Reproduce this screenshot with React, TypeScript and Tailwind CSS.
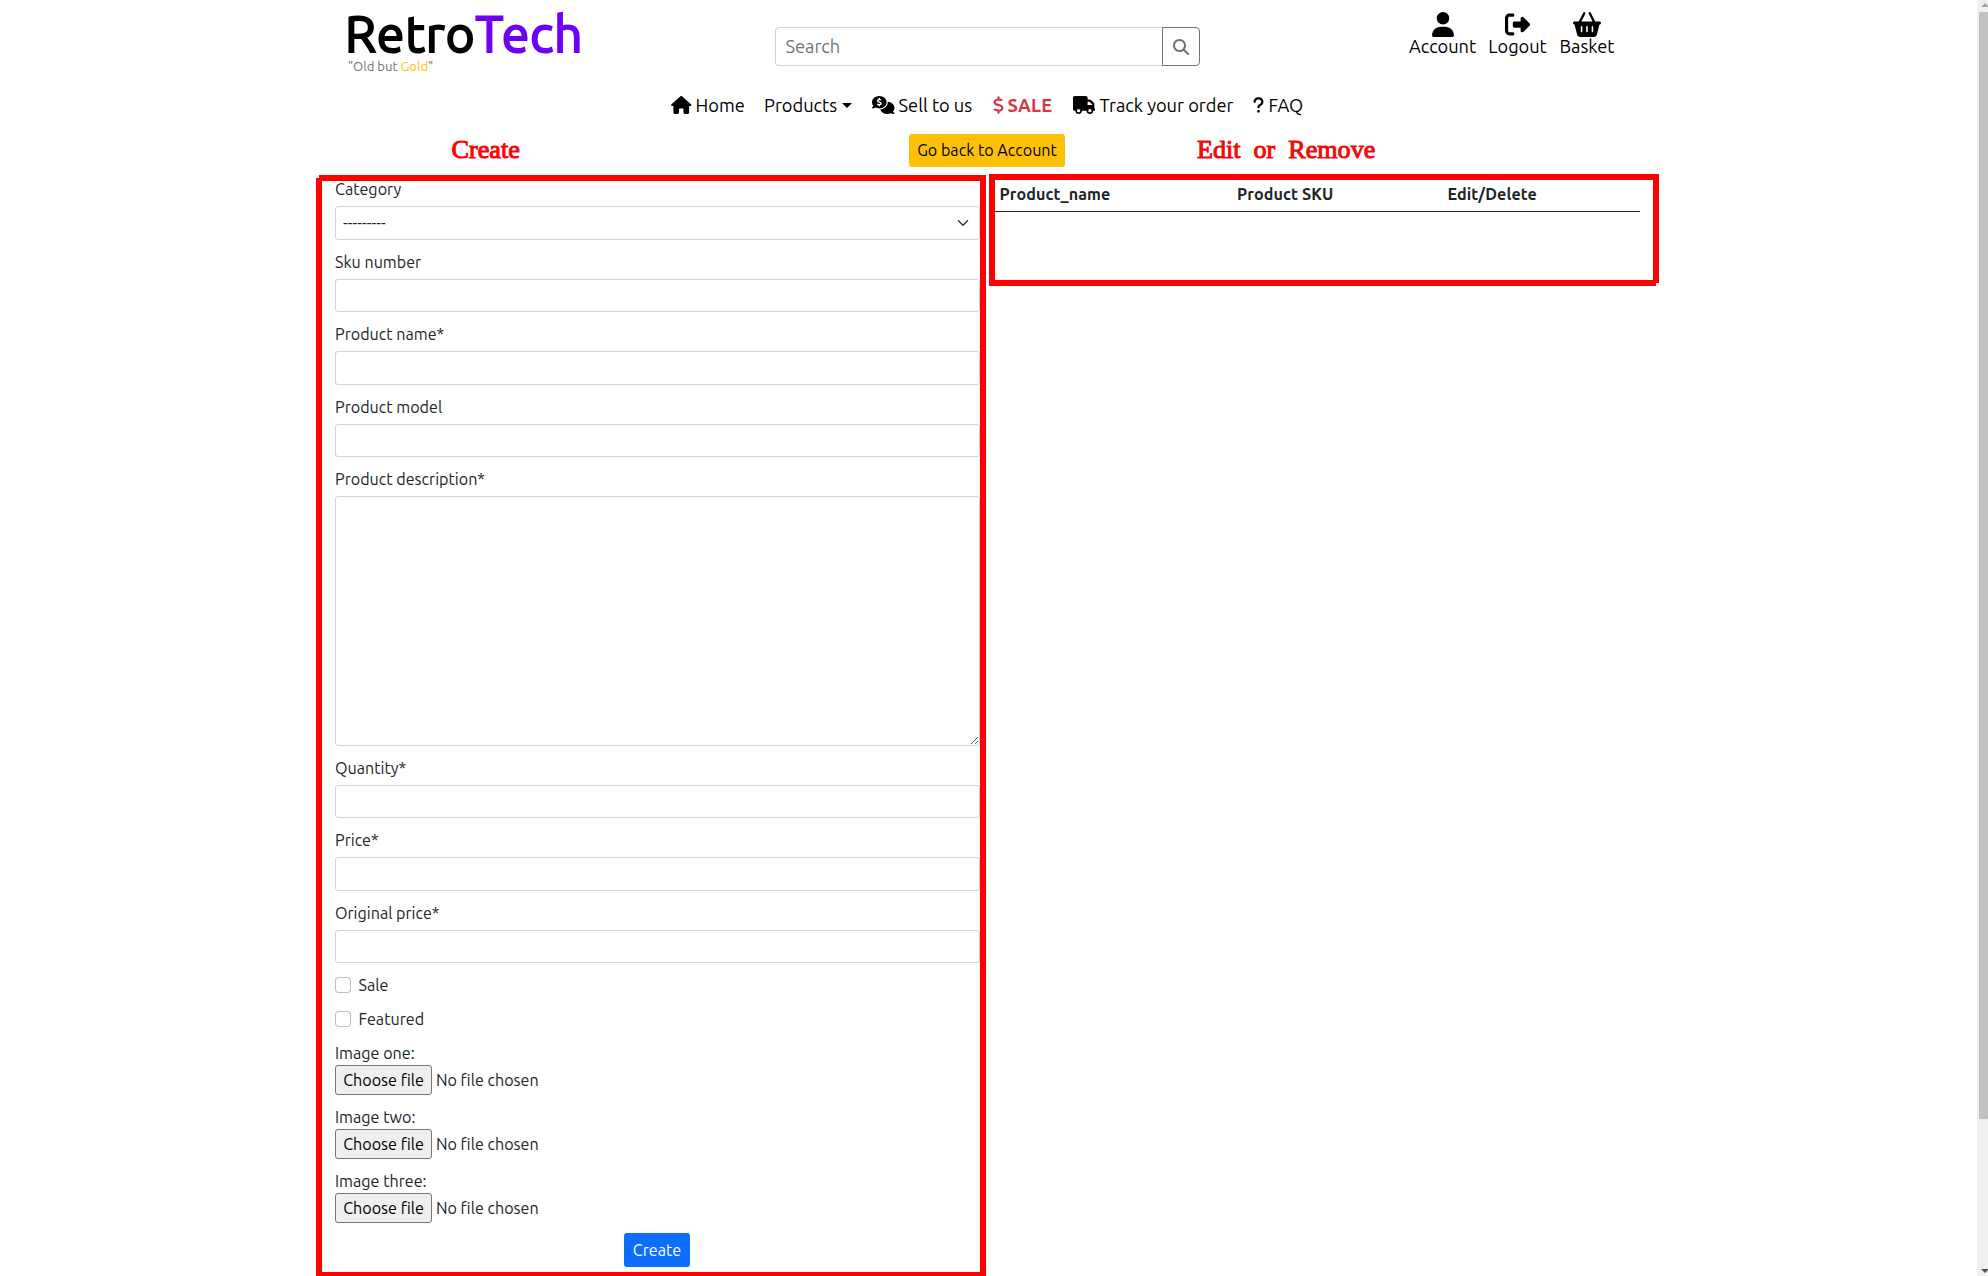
import type { ReactNode } from "react";
import {
  FaBasketShopping,
  FaCommentsDollar,
  FaDollarSign,
  FaHouse,
  FaMagnifyingGlass,
  FaQuestion,
  FaRightFromBracket,
  FaTruck,
  FaUser,
} from "react-icons/fa6";

function Header() {
  return (
    <header className="flex h-[93px] items-start text-black">
      <div className="mt-1 ml-[345px] w-[430px]">
        <div className="text-[50px] leading-[58px] tracking-[0.8px] [-webkit-text-stroke:2px_currentColor]">
          <span>Retro</span>
          <span className="text-[#6f00f7]">Tech</span>
        </div>
        <div className="ml-[3px] text-[13.1px] leading-[9px] text-[#6c757d]">
          "Old but <span className="text-[#ffc107]">Gold</span>"
        </div>
      </div>
      <div className="mt-[27px] flex h-[39px] w-[425px]">
        <div className="flex-1 rounded-l border border-r-0 border-[#ced4da] pl-[9.5px] text-[18.2px] leading-[37px] text-[#6c757d]">
          Search
        </div>
        <button className="flex w-[38px] items-center justify-center rounded-r border border-[#6c757d] text-[#6c757d]">
          <FaMagnifyingGlass className="size-4" />
        </button>
      </div>
      <div className="mt-3 ml-[209px] flex gap-3 text-[18.2px] leading-6">
        <Shortcut label="Account" width="w-[67px]">
          <FaUser className="h-[25px] w-[22px]" />
        </Shortcut>
        <Shortcut label="Logout" width="w-[59px]">
          <FaRightFromBracket className="size-[25px]" />
        </Shortcut>
        <Shortcut label="Basket" width="w-[56px]">
          <FaBasketShopping className="h-[25px] w-[28px]" />
        </Shortcut>
      </div>
    </header>
  );
}

function Shortcut({ label, width, children }: { label: string; width: string; children: ReactNode }) {
  return (
    <a className={`flex flex-col items-center ${width}`}>
      {children}
      <span className="-mt-[3px] whitespace-nowrap">{label}</span>
    </a>
  );
}

function Nav() {
  return (
    <nav className="flex h-6 pl-[671px] text-[18.25px] leading-6 whitespace-nowrap text-black">
      <a className="flex w-[93px] items-center">
        <FaHouse className="mr-1 h-[18px] w-[20.5px]" />
        Home
      </a>
      <a className="flex w-[108px] items-center">
        Products
        <span className="ml-[5px] border-x-[5px] border-t-[5px] border-x-transparent border-t-black" />
      </a>
      <a className="flex w-[120.5px] items-center">
        <FaCommentsDollar className="mr-1 h-[18px] w-[22.5px]" />
        Sell to us
      </a>
      <a className="flex w-[80px] items-center font-bold text-[#dc3545]">
        <FaDollarSign className="mr-1 h-[18px] w-[11px]" />
        <span className="tracking-[0.2px]">SALE</span>
      </a>
      <a className="flex w-[180.5px] items-center">
        <FaTruck className="mr-[4.5px] h-[18px] w-[22.5px]" />
        Track your order
      </a>
      <a className="flex items-center">
        <FaQuestion className="mr-[4.5px] h-[18px] w-[11px]" />
        FAQ
      </a>
    </nav>
  );
}

function ActionRow() {
  return (
    <div className="flex h-[57px] items-start pt-[17px]">
      <div className="mt-[2px] ml-[451.5px] w-[457.5px] font-['Liberation_Serif',serif] text-[26.2px] leading-7 text-[#ff0000] [-webkit-text-stroke:1px_#ff0000]">
        Create
      </div>
      <button className="h-[33px] w-[156px] rounded-[3px] bg-[#ffc107] pb-px text-black">Go back to Account</button>
      <div className="mt-[2px] ml-[132px] font-['Liberation_Serif',serif] text-[26.1px] leading-7 whitespace-pre text-[#f00a0a] [-webkit-text-stroke:1px_#f00a0a]">
        Edit  or  Remove
      </div>
    </div>
  );
}

function Field({ label, children }: { label: string; children?: ReactNode }) {
  return (
    <label className="mb-2.5 block">
      <span className="mb-[5px] block leading-6">{label}</span>
      {children ?? <input className="block h-[33.5px] w-full rounded-[3px] border border-[#ced4da]" />}
    </label>
  );
}

function Check({ label }: { label: string }) {
  return (
    <label className="mb-2.5 flex h-6 items-center gap-[7.5px] leading-6">
      <input type="checkbox" className="size-4 appearance-none rounded border border-black/25 bg-white" />
      {label}
    </label>
  );
}

function FileField({ label }: { label: string }) {
  return (
    <div className="mb-2.5">
      <div className="leading-6">{label}</div>
      <div className="flex h-[30px] items-center">
        <button className="h-[30px] w-[97px] rounded-[3px] border border-[#767676] bg-[#efefef] text-black">
          Choose file
        </button>
        <span className="ml-1">No file chosen</span>
      </div>
    </div>
  );
}

function CreatePanel() {
  return (
    <section className="relative mt-px ml-[316px] h-[1101px] w-[670px] border-[6px] border-b-4 border-[#ff0000] pl-[13px]">
      <span className="absolute -top-1.5 -left-1.5 size-[3px] bg-white" />
      <form className="-mt-1">
        <Field label="Category">
          <div className="flex h-[33.5px] items-center justify-between rounded-[3px] border border-[#ced4da] pr-2.5 pl-[7px]">
            <span className="tracking-[0.1px]">---------</span>
            <svg viewBox="0 0 16 16" className="size-3 fill-none stroke-[#343a40] stroke-2">
              <path strokeLinecap="round" strokeLinejoin="round" d="m2 5 6 6 6-6" />
            </svg>
          </div>
        </Field>
        <Field label="Sku number" />
        <Field label="Product name*" />
        <Field label="Product model" />
        <Field label="Product description*">
          <textarea className="block h-[249.5px] w-full resize rounded-[3px] border border-[#ced4da]" />
        </Field>
        <Field label="Quantity*" />
        <Field label="Price*" />
        <Field label="Original price*" />
        <Check label="Sale" />
        <Check label="Featured" />
        <FileField label="Image one:" />
        <FileField label="Image two:" />
        <FileField label="Image three:" />
        <button className="ml-[289px] block h-[34px] w-[66px] rounded-[3px] bg-[#0d6efd] text-white">Create</button>
      </form>
    </section>
  );
}

function EditPanel() {
  return (
    <section className="relative ml-[3px] h-28 w-[670px] border-[6px] border-[#ff0000]">
      <span className="absolute -right-1.5 -bottom-1.5 size-[3px] bg-white" />
      <div className="flex h-8 w-[645px] border-b border-[#212529] pt-[2px] pl-[4.5px] leading-6 font-bold tracking-[0.1px]">
        <div className="w-[237.5px]">Product_name</div>
        <div className="w-[210.5px]">Product SKU</div>
        <div>Edit/Delete</div>
      </div>
    </section>
  );
}

function Scrollbar() {
  return (
    <div className="flex w-[11px] flex-col items-end bg-[#f0f0f0]">
      <div className="flex h-3 w-[7px] flex-col items-center pt-[3px]">
        <span className="border-x-4 border-b-4 border-x-transparent border-b-[#a3a3a3]" />
      </div>
      <div className="h-[1107px] w-[9px] bg-[#c1c1c1]" />
      <div className="mt-auto flex h-[7px] w-[7px] flex-col items-center">
        <span className="border-x-4 border-t-4 border-x-transparent border-t-[#505050]" />
      </div>
    </div>
  );
}

export default function App() {
  return (
    <div className="flex h-[1276px] w-[1988px] overflow-hidden bg-white font-['Ubuntu','Noto_Sans',sans-serif] text-[16.13px] text-[#212529]">
      <main className="w-[1977px]">
        <Header />
        <Nav />
        <ActionRow />
        <div className="flex items-start">
          <CreatePanel />
          <EditPanel />
        </div>
      </main>
      <Scrollbar />
    </div>
  );
}
